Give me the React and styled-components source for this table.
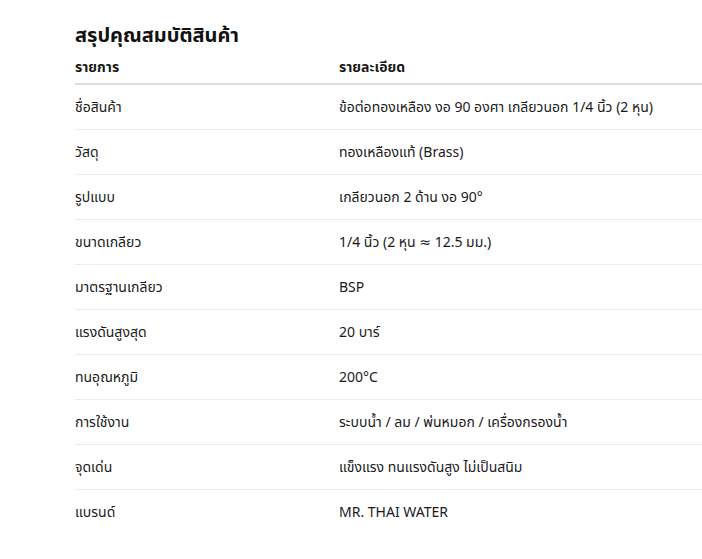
import React from 'react';
import styled, { createGlobalStyle } from 'styled-components';

const rows = [
  ['ชื่อสินค้า', 'ข้อต่อทองเหลือง งอ 90 องศา เกลียวนอก 1/4 นิ้ว (2 หุน)'],
  ['วัสดุ', 'ทองเหลืองแท้ (Brass)'],
  ['รูปแบบ', 'เกลียวนอก 2 ด้าน งอ 90°'],
  ['ขนาดเกลียว', '1/4 นิ้ว (2 หุน ≈ 12.5 มม.)'],
  ['มาตรฐานเกลียว', 'BSP'],
  ['แรงดันสูงสุด', '20 บาร์'],
  ['ทนอุณหภูมิ', '200°C'],
  ['การใช้งาน', 'ระบบน้ำ / ลม / พ่นหมอก / เครื่องกรองน้ำ'],
  ['จุดเด่น', 'แข็งแรง ทนแรงดันสูง ไม่เป็นสนิม'],
  ['แบรนด์', 'MR. THAI WATER'],
];

const App = () => {
  return (
    <>
      <GlobalStyle />
      <Section>
        <Title>สรุปคุณสมบัติสินค้า</Title>
        <SpecTable>
          <thead>
            <tr>
              <HeadCell>รายการ</HeadCell>
              <HeadCell>รายละเอียด</HeadCell>
            </tr>
          </thead>
          <tbody>
            {rows.map(([label, value]) => (
              <Row key={label}>
                <Cell>{label}</Cell>
                <Cell>{value}</Cell>
              </Row>
            ))}
          </tbody>
        </SpecTable>
      </Section>
    </>
  );
};

export default App;

const GlobalStyle = createGlobalStyle`
  body {
    margin: 0;
    background: #ffffff;
    color: #1a1a1a;
    font-family: Tahoma, 'Noto Sans Thai', 'Noto Sans', 'DejaVu Sans', sans-serif;
  }
`;

const Section = styled.div`
  padding: 22px 0 0 75px;
`;

const Title = styled.h2`
  margin: 0;
  font-size: 20px;
  font-weight: 700;
  line-height: 28px;
  color: #111;
`;

const SpecTable = styled.table`
  width: 100%;
  border-collapse: collapse;
  font-size: 14px;
  line-height: 16px;
`;

const HeadCell = styled.th`
  box-sizing: border-box;
  text-align: left;
  font-weight: 700;
  padding: 10px 0 7px;
  line-height: 16px;
  border-bottom: 2px solid #dcdcdc;
  &:first-child {
    width: 264px;
  }
`;

const Row = styled.tr`
  border-bottom: 1px solid #ececec;
  &:last-child {
    border-bottom: none;
  }
`;

const Cell = styled.td`
  box-sizing: border-box;
  padding: 3px 0 0;
  height: 45px;
  line-height: 16px;
  vertical-align: middle;
`;
